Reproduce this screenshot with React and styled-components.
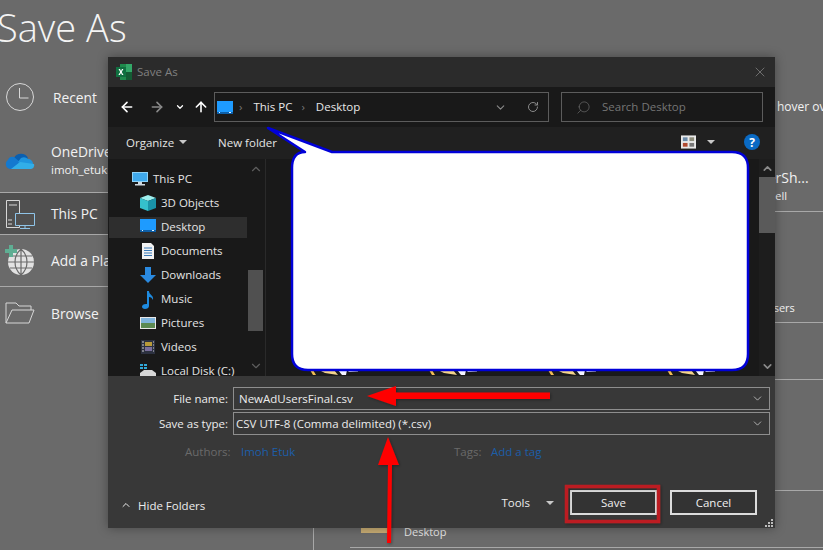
import React from "react";
import styled, { createGlobalStyle } from "styled-components";
import { ArrowLeft, ArrowRight, ArrowUp, ChevronDown, ChevronUp, RotateCw, Search, X } from "lucide-react";

const GlobalStyle = createGlobalStyle`
  html, body {
    margin: 0;
    padding: 0;
    background: #6a6a6a;
  }
  * {
    box-sizing: border-box;
  }
`;

// Excel backstage behind the dialog
const Page = styled.div`
  position: relative;
  display: flex;
  width: 823px;
  height: 550px;
  overflow: hidden;
  background: #6a6a6a;
  color: #f2f2f2;
  font-family: "Open Sans", "Liberation Sans", sans-serif;
`;

const Sidebar = styled.div`
  position: relative;
  width: 314px;
  flex-shrink: 0;

  &::after {
    content: "";
    position: absolute;
    right: 0;
    bottom: 0;
    width: 1px;
    height: 60px;
    background: #a8a8a8;
  }
`;

const PageTitle = styled.h1`
  height: 72px;
  margin: 0 0 0 -3px;
  padding-top: 3px;
  font-size: 38px;
  line-height: 48px;
  font-weight: 300;
  color: #f4f4f4;
`;

const NavItem = styled.div`
  display: flex;
  align-items: center;
  gap: ${(p) => p.$gap || 15}px;
  height: ${(p) => p.$h}px;
  padding-left: 4px;
  padding-top: ${(p) => p.$pt || 0}px;
  background: ${(p) => (p.$active ? "#505050" : "transparent")};
  border-top: ${(p) => (p.$active ? "1px solid #a8a8a8" : "none")};
  border-bottom: ${(p) => (p.$active || p.$line ? "1px solid #a8a8a8" : "none")};
`;

const NavIcon = styled.div`
  width: 32px;
  height: 32px;
  flex-shrink: 0;
  display: flex;
  align-items: center;
  justify-content: center;
`;

const NavLabel = styled.div`
  font-size: 13.8px;
  line-height: 19px;
`;

const NavSub = styled.div`
  font-size: 11.5px;
  line-height: 17px;
`;

const Main = styled.div`
  flex: 1;
  min-width: 0;
  display: flex;
  flex-direction: column;
`;

const Hint = styled.div`
  height: 130px;
  padding: 97px 0 0 463px;
  font-size: 12px;
  line-height: 20px;
  white-space: nowrap;
`;

const FolderRow = styled.div`
  display: flex;
  flex-direction: column;
  justify-content: ${(p) => p.$justify || "flex-start"};
  height: ${(p) => p.$h}px;
  margin-left: 36px;
  padding: ${(p) => p.$pad || "0"};
  padding-left: ${(p) => p.$inset || 0}px;
  border-bottom: 1px solid #a8a8a8;
  white-space: nowrap;
`;

const FolderName = styled.div`
  font-size: 14px;
  line-height: 19px;
`;

const FolderPath = styled.div`
  font-size: 11px;
  line-height: 17px;
`;

const RecentFolder = styled.div`
  display: flex;
  align-items: center;
  gap: 16px;
  padding: 33px 0 0 11px;
`;

const RecentName = styled.div`
  font-size: 11px;
  line-height: 16px;
  color: #e6e6e6;
`;

// Dialog window
const Dialog = styled.div`
  position: absolute;
  left: 108px;
  top: 57px;
  width: 667px;
  height: 471px;
  display: flex;
  flex-direction: column;
  background: #383838;
  box-shadow: 0 0 10px rgba(0, 0, 0, 0.35);
  font-size: 11.5px;
`;

const TitleBar = styled.div`
  height: 30px;
  flex-shrink: 0;
  display: flex;
  align-items: center;
  padding: 0 7px 0 8px;
  background: #2b2b2b;
  color: #808080;
`;

const TitleText = styled.span`
  margin-left: 5px;
  margin-bottom: 2px;
  flex: 1;
`;

const AddressRow = styled.div`
  height: 40px;
  flex-shrink: 0;
  display: flex;
  align-items: center;
  padding: 0 12px 0 10px;
  background: #191919;
`;

const NavButton = styled.div`
  width: ${(p) => p.$w}px;
  margin-left: ${(p) => p.$ml || 0}px;
  flex-shrink: 0;
  display: flex;
  justify-content: center;
  color: ${(p) => (p.$off ? "#8a8a8a" : "#ffffff")};
`;

const AddressBox = styled.div`
  width: 335px;
  height: 30px;
  margin-left: 1px;
  flex-shrink: 0;
  display: flex;
  align-items: center;
  padding-left: 2px;
  border: 1px solid #5c5c5c;
  color: #e8e8e8;
`;

const Crumb = styled.span`
  margin-right: 3px;
  margin-bottom: 2px;
`;

const CrumbSep = styled.span`
  display: flex;
  margin: 0 11px 2px 6px;
  color: #777;
`;

const AddressTools = styled.div`
  margin-left: auto;
  display: flex;
  align-items: center;
  gap: 20px;
  padding-right: 9px;
  color: #8a8a8a;
`;

const SearchBox = styled.div`
  width: 202px;
  height: 30px;
  margin-left: 12px;
  flex-shrink: 0;
  display: flex;
  align-items: center;
  gap: 11px;
  padding-left: 14px;
  border: 1px solid #5c5c5c;
  color: #757575;
`;

const SearchText = styled.span`
  margin-bottom: 2px;
`;

const Toolbar = styled.div`
  height: 32px;
  flex-shrink: 0;
  display: flex;
  align-items: center;
  padding: 0 15px 2px 18px;
  background: #202020;
  color: #e4e4e4;
`;

const Caret = styled.span`
  display: inline-block;
  width: 0;
  height: 0;
  margin-left: ${(p) => p.$ml || 0}px;
  border-left: 4px solid transparent;
  border-right: 4px solid transparent;
  border-top: 4px solid #c8c8c8;
`;

const ToolbarLink = styled.span`
  margin-left: 31px;
`;

const ViewTools = styled.div`
  margin-left: auto;
  display: flex;
  align-items: center;
`;

const HelpIcon = styled.span`
  width: 16px;
  height: 16px;
  margin-left: 29px;
  display: flex;
  align-items: center;
  justify-content: center;
  border-radius: 50%;
  background: #0a6ac4;
  color: #fff;
  font-size: 12px;
  font-weight: 700;
`;

const Content = styled.div`
  flex: 1;
  min-height: 0;
  display: flex;
  background: #191919;
`;

const Tree = styled.div`
  position: relative;
  width: 158px;
  flex-shrink: 0;
  overflow: hidden;
  padding-top: 8px;
  border-right: 1px solid #2a2a2a;
`;

const TreeRow = styled.div`
  display: flex;
  align-items: center;
  gap: 5px;
  width: 138px;
  height: 24px;
  margin-left: 1px;
  padding-left: ${(p) => (p.$root ? 23 : 31)}px;
  color: #e4e4e4;
  white-space: nowrap;
  background: ${(p) => (p.$active ? "linear-gradient(#2e2e2e, #2e2e2e) center / 100% 21px no-repeat" : "transparent")};
`;

const TreeLabel = styled.span`
  margin-bottom: 2px;
`;

const TreeIcon = styled.span`
  width: 16px;
  height: 16px;
  flex-shrink: 0;
  display: flex;
`;

const TreeScroll = styled.div`
  position: absolute;
  top: 0;
  right: 2px;
  bottom: 0;
  width: 15px;
  display: flex;
  flex-direction: column;
  justify-content: space-between;
  align-items: center;
  padding: 3px 0;
  color: #5e5e5e;
`;

const TreeThumb = styled.div`
  position: absolute;
  left: 0;
  top: 111px;
  width: 15px;
  height: 61px;
  background: #505050;
`;

const Files = styled.div`
  flex: 1;
  display: flex;
  align-items: flex-end;
  gap: 69px;
  padding-left: 44px;
`;

const Thumb = styled.svg`
  display: block;
  flex-shrink: 0;
`;

const FileScroll = styled.div`
  position: relative;
  width: 16px;
  flex-shrink: 0;
  display: flex;
  flex-direction: column;
  justify-content: space-between;
  align-items: center;
  padding: 3px 0;
  background: #1d1d1d;
  color: #8a8a8a;
`;

const FileThumb = styled.div`
  position: absolute;
  left: 0;
  top: 18px;
  width: 16px;
  height: 56px;
  background: #5a5a5a;
`;

const Footer = styled.div`
  position: relative;
  height: 152px;
  flex-shrink: 0;
  padding: 11px 5px 0 0;
  color: #ececec;
`;

const FieldRow = styled.div`
  display: flex;
  align-items: center;
  margin-bottom: 2px;
`;

const FieldLabel = styled.label`
  width: 120px;
  flex-shrink: 0;
  text-align: right;
`;

const FieldBox = styled.div`
  flex: 1;
  height: 23px;
  margin-left: 5px;
  display: flex;
  align-items: center;
  justify-content: space-between;
  padding: 0 5px 0 ${(p) => p.$pl}px;
  border: 1px solid #8e8e8e;
  color: #ececec;
`;

const MetaRow = styled.div`
  display: grid;
  grid-template-columns: 56px 213px 37px auto;
  margin: 8px 0 0 77px;
  line-height: 17px;
`;

const MetaLabel = styled.span`
  color: #6a6a6a;
`;

const MetaValue = styled.span`
  color: #1c5ea8;
`;

const ActionRow = styled.div`
  position: absolute;
  left: 0;
  right: 0;
  bottom: 13px;
  display: flex;
  align-items: center;
  padding: 0 18px 0 12px;
`;

const HideFolders = styled.div`
  display: flex;
  align-items: center;
  gap: 6px;
  margin-top: 5px;
`;

const ToolsMenu = styled.div`
  margin-left: auto;
  display: flex;
  align-items: center;
`;

const DialogButton = styled.button`
  width: 87px;
  height: 25px;
  margin-left: ${(p) => p.$ml}px;
  padding: 0;
  background: #333;
  border: 2px solid #dcdcdc;
  color: #f0f0f0;
  font: inherit;
`;

const Grip = styled.svg`
  position: absolute;
  right: 2px;
  bottom: 1px;
`;

// Callout and red arrows pasted on the screenshot
const Annotations = styled.svg`
  position: absolute;
  left: 0;
  top: 0;
  pointer-events: none;
`;

const ClockIcon = () => (
  <svg width="30" height="30" viewBox="0 0 30 30" fill="none" stroke="#d8d8d8" strokeWidth="1">
    <circle cx="15" cy="15" r="13.5" />
    <path d="M14.5 6v10h9" />
  </svg>
);

const CloudIcon = () => (
  <svg width="30" height="20" viewBox="0 0 30 20">
    <path d="M9 8a8 8 0 0 1 14 0l-6 6L9 11z" fill="#0a5fb0" />
    <path d="M3 10a5 5 0 0 1 6-3l6 5-6 7H5a5 5 0 0 1-2-9z" fill="#1479cf" />
    <path d="M16 8a6 6 0 0 1 7 1 5 5 0 0 1 5 5l-9 2-6-4z" fill="#1f95de" />
    <path d="M6 19h20a4 4 0 0 0 3-5l-14-2z" fill="#32aee8" />
  </svg>
);

const ComputerIcon = () => (
  <svg width="30" height="30" viewBox="0 0 30 30" fill="none" stroke="#d6d6d6" strokeWidth="1">
    <path d="M1.500 1.500h13v27h-13z" />
    <path d="M4 6h8M3 21h4M3 25h4" />
    <path d="M10.500 14.500h19v12h-19z" fill="#505050" stroke="#8fc4e8" />
    <path d="M20 26.500v3M15 29.500h10" stroke="#8fc4e8" />
  </svg>
);

const GlobeIcon = () => (
  <svg width="32" height="32" viewBox="0 0 32 32" fill="none">
    <circle cx="17" cy="17" r="13" fill="#e2e2e2" />
    <path d="M4 17h26M6 11h22M6 23h22M17 4v26M17 4c-8 7-8 19 0 26M17 4c8 7 8 19 0 26" stroke="#6a6a6a" strokeWidth="1.200" />
    <path d="M5 0h4v4h4v4H9v4H5V8H1V4h4z" fill="#5fae93" />
  </svg>
);

const BrowseIcon = () => (
  <svg width="30" height="22" viewBox="0 0 30 22" fill="none" stroke="#d6d6d6" strokeWidth="1">
    <path d="M1 21V1h10l3 3h12v4" />
    <path d="M1 21 7 8h22l-5 13z" />
  </svg>
);

const ExcelIcon = () => (
  <svg width="16" height="16" viewBox="0 0 16 16">
    <path d="M4 0h12v16H4z" fill="#1f8a4c" />
    <path d="M10 0h6v8h-6z" fill="#33a868" />
    <path d="M10 8h6v8h-6z" fill="#145c34" />
    <path d="M0 3h10v10H0z" fill="#107040" />
    <path d="m2.500 5 1.700 3-1.800 3h1.400l1.200-2.100L6 11h1.500L5.700 8l1.700-3H6l-1 1.900L4 5z" fill="#fff" />
  </svg>
);

const DesktopIcon = () => (
  <svg width="16" height="13" viewBox="0 0 16 13">
    <path d="M0 0h16v12H0z" fill="#1e9bff" />
    <path d="M0 11h16v2H0z" fill="#0d5fa8" />
    <path d="M2 11.500h1M12 11.500h2" stroke="#e8f4ff" />
  </svg>
);

const MonitorIcon = () => (
  <svg width="16" height="16" viewBox="0 0 16 16">
    <path d="M0 1h16v10H0z" fill="#8fd3f7" />
    <path d="M1 2h14v8H1z" fill="#3fa9ec" />
    <path d="M6 11h4v2H6zM3 13h10v1.500H3z" fill="#cfd8df" />
  </svg>
);

const CubeIcon = () => (
  <svg width="16" height="16" viewBox="0 0 16 16">
    <path d="M8 0 16 3 8 6 0 3z" fill="#9ff0ee" />
    <path d="M0 3l8 3v10l-8-3z" fill="#35c0cc" />
    <path d="M16 3 8 6v10l8-3z" fill="#1a93a8" />
  </svg>
);

const DocIcon = () => (
  <svg width="16" height="16" viewBox="0 0 16 16">
    <path d="M2 0h9l3 3v13H2z" fill="#f2f2f2" />
    <path d="M4 5h8M4 7.500h8M4 10h8M4 12.500h8" stroke="#3a7ab8" />
  </svg>
);

const DownloadIcon = () => (
  <svg width="16" height="16" viewBox="0 0 16 16">
    <path d="M5 0h6v8h5l-8 8-8-8h5z" fill="#2a8ae0" />
  </svg>
);

const MusicIcon = () => (
  <svg width="16" height="18" viewBox="0 0 16 18">
    <path d="M7 0h2c0 4 5 4 4 9-1-2-2-3-4-3v9c0 2-2 3-4 3s-3-1-3-2.500S4 12.500 7 13z" fill="#1e8be0" />
  </svg>
);

const PicturesIcon = () => (
  <svg width="16" height="16" viewBox="0 0 16 16">
    <path d="M0 2h16v12H0z" fill="#e8e8e8" />
    <path d="M1 3h14v5H1z" fill="#7fb4dc" />
    <path d="M1 8h14v5H1z" fill="#5c8a52" />
  </svg>
);

const VideosIcon = () => (
  <svg width="16" height="16" viewBox="0 0 16 16">
    <path d="M1 1h14v14H1z" fill="#2c3140" />
    <path d="M5 3h7v4H5z" fill="#b89a3a" />
    <path d="M5 8h7v4H5z" fill="#7a6f9c" />
    <path d="M2 3h2M2 6h2M2 9h2M2 12h2M13 3h1M13 6h1M13 9h1M13 12h1" stroke="#d0d0d0" />
  </svg>
);

const DiskIcon = () => (
  <svg width="16" height="16" viewBox="0 0 16 16">
    <path d="M0 10 4 7h8l4 3v4H0z" fill="#d8d8d8" />
    <path d="M0 1h3v2H0zM4 1h3v2H4zM0 4h3v2H0zM4 4h3v2H4z" fill="#30a8d8" />
  </svg>
);

const treeItems = [
  { label: "3D Objects", icon: <CubeIcon /> },
  { label: "Desktop", icon: <DesktopIcon />, active: true },
  { label: "Documents", icon: <DocIcon /> },
  { label: "Downloads", icon: <DownloadIcon /> },
  { label: "Music", icon: <MusicIcon /> },
  { label: "Pictures", icon: <PicturesIcon /> },
  { label: "Videos", icon: <VideosIcon /> },
  { label: "Local Disk (C:)", icon: <DiskIcon /> },
];

const FolderThumb = () => (
  <Thumb width="50" height="6" viewBox="0 0 50 6">
    <path d="M0 0h3l3 5H3z" fill="#f0bc54" />
    <path d="M9 0h15l4 5-13-2z" fill="#f4d48c" />
    <path d="M28 0h9l-1 5h-4z" fill="#f4f4ff" />
    <path d="M37 0h11v1.500l-9 .5z" fill="#d8d8f0" />
  </Thumb>
);

const App = () => {
  return (
    <Page>
      <GlobalStyle />
      <Sidebar>
        <PageTitle>Save As</PageTitle>
        <NavItem $h={50} $gap={17}>
          <NavIcon><ClockIcon /></NavIcon>
          <NavLabel>Recent</NavLabel>
        </NavItem>
        <NavItem $h={70} $pt={6}>
          <NavIcon><CloudIcon /></NavIcon>
          <div>
            <NavLabel>OneDrive</NavLabel>
            <NavSub>imoh_etuk</NavSub>
          </div>
        </NavItem>
        <NavItem $h={43} $active>
          <NavIcon><ComputerIcon /></NavIcon>
          <NavLabel>This PC</NavLabel>
        </NavItem>
        <NavItem $h={52} $line>
          <NavIcon><GlobeIcon /></NavIcon>
          <NavLabel>Add a Place</NavLabel>
        </NavItem>
        <NavItem $h={52}>
          <NavIcon><BrowseIcon /></NavIcon>
          <NavLabel>Browse</NavLabel>
        </NavItem>
      </Sidebar>

      <Main>
        <Hint>hover over a folder.</Hint>
        <FolderRow $h={82} $pad="38px 0 0" $inset={390}>
          <FolderName>PowerSh...</FolderName>
          <FolderPath>Win Shell</FolderPath>
        </FolderRow>
        <FolderRow $h={111} $justify="flex-end" $pad="0 0 6px" $inset={402}>
          <FolderPath>AdUsers</FolderPath>
        </FolderRow>
        <FolderRow $h={57} />
        <FolderRow $h={111} />
        <FolderRow $h={57}>
          <RecentFolder>
            <svg width="27" height="10" viewBox="0 0 27 10"><path d="M0 0h27v6H0z" fill="#c9ad74" /></svg>
            <RecentName>Desktop</RecentName>
          </RecentFolder>
        </FolderRow>
      </Main>

      <Dialog>
        <TitleBar>
          <ExcelIcon />
          <TitleText>Save As</TitleText>
          <X size={16} strokeWidth={1.2} />
        </TitleBar>

        <AddressRow>
          <NavButton $w={18}><ArrowLeft size={16} strokeWidth={2.4} /></NavButton>
          <NavButton $w={42} $off><ArrowRight size={16} strokeWidth={2.4} /></NavButton>
          <NavButton $w={12} $ml={-4}><ChevronDown size={10} strokeWidth={3} /></NavButton>
          <NavButton $w={24} $ml={3}><ArrowUp size={16} strokeWidth={2.4} /></NavButton>
          <AddressBox>
            <DesktopIcon />
            <CrumbSep>›</CrumbSep>
            <Crumb>This PC</Crumb>
            <CrumbSep>›</CrumbSep>
            <Crumb>Desktop</Crumb>
            <AddressTools>
              <ChevronDown size={13} strokeWidth={2} />
              <RotateCw size={12} strokeWidth={2} />
            </AddressTools>
          </AddressBox>
          <SearchBox>
            <Search size={15} strokeWidth={1} style={{ transform: "scaleX(-1)" }} />
            <SearchText>Search Desktop</SearchText>
          </SearchBox>
        </AddressRow>

        <Toolbar>
          Organize<Caret $ml={5} />
          <ToolbarLink>New folder</ToolbarLink>
          <ViewTools>
            <svg width="15" height="14" viewBox="0 0 16 14">
              <path d="M0 0h16v14H0z" fill="#e8e8e8" />
              <path d="M2 2h5v4H2z" fill="#6a8aa8" />
              <path d="M9 2h5v4H9z" fill="#8a8a78" />
              <path d="M2 8h5v4H2z" fill="#b04a30" />
              <path d="M9 8h5v4H9z" fill="#777" />
            </svg>
            <Caret $ml={11} />
            <HelpIcon>?</HelpIcon>
          </ViewTools>
        </Toolbar>

        <Content>
          <Tree>
            <TreeRow $root>
              <TreeIcon><MonitorIcon /></TreeIcon>
              <TreeLabel>This PC</TreeLabel>
            </TreeRow>
            {treeItems.map((item) => (
              <TreeRow key={item.label} $active={item.active}>
                <TreeIcon>{item.icon}</TreeIcon>
                <TreeLabel>{item.label}</TreeLabel>
              </TreeRow>
            ))}
            <TreeScroll>
              <ChevronUp size={14} />
              <TreeThumb />
              <ChevronDown size={14} />
            </TreeScroll>
          </Tree>
          <Files>
            <FolderThumb />
            <FolderThumb />
            <FolderThumb />
            <FolderThumb />
          </Files>
          <FileScroll>
            <ChevronUp size={13} strokeWidth={3} />
            <FileThumb />
            <ChevronDown size={13} strokeWidth={3} />
          </FileScroll>
        </Content>

        <Footer>
          <FieldRow>
            <FieldLabel>File name:</FieldLabel>
            <FieldBox $pl={5}>
              NewAdUsersFinal.csv
              <ChevronDown size={13} strokeWidth={1.2} />
            </FieldBox>
          </FieldRow>
          <FieldRow>
            <FieldLabel>Save as type:</FieldLabel>
            <FieldBox $pl={2}>
              CSV UTF-8 (Comma delimited) (*.csv)
              <ChevronDown size={13} strokeWidth={1.2} />
            </FieldBox>
          </FieldRow>
          <MetaRow>
            <MetaLabel>Authors:</MetaLabel>
            <MetaValue>Imoh Etuk</MetaValue>
            <MetaLabel>Tags:</MetaLabel>
            <MetaValue>Add a tag</MetaValue>
          </MetaRow>
          <ActionRow>
            <HideFolders>
              <ChevronUp size={12} strokeWidth={2} />
              Hide Folders
            </HideFolders>
            <ToolsMenu>
              Tools<Caret $ml={16} />
              <DialogButton $ml={16}>Save</DialogButton>
              <DialogButton $ml={13}>Cancel</DialogButton>
            </ToolsMenu>
          </ActionRow>
          <Grip width="9" height="8" viewBox="0 0 9 8">
            <path d="M7 0h2v2H7zM4 3h2v2H4zM7 3h2v2H7zM1 6h2v2H1zM4 6h2v2H4zM7 6h2v2H7z" fill="#bdbdbd" />
          </Grip>
        </Footer>
      </Dialog>

      <Annotations width="823" height="550" viewBox="0 0 823 550">
        <defs>
          <filter id="soft" x="-20%" y="-20%" width="140%" height="140%">
            <feDropShadow dx="1" dy="1" stdDeviation="1.500" floodColor="#000" floodOpacity="0.35" />
          </filter>
        </defs>
        <path
          d="M268 128 332 152H732Q748 152 748 168V354Q748 370 732 370H308Q292 370 292 354V168Q292 152 305 152Z"
          fill="#fff"
          stroke="#0000d8"
          strokeWidth="2.500"
          strokeLinejoin="round"
        />
        <path
          d="M367 396 396 386V392.500H550V399H396V406Z"
          fill="#ff0000"
          filter="url(#soft)"
        />
        <path
          d="M388 437 399 465H392L391 543H387L388 465H378Z"
          fill="#ff0000"
          filter="url(#soft)"
        />
        <rect x="566.500" y="486.500" width="92" height="35" fill="none" stroke="#bc1c20" strokeWidth="3.500" filter="url(#soft)" />
      </Annotations>
    </Page>
  );
};

export default App;
